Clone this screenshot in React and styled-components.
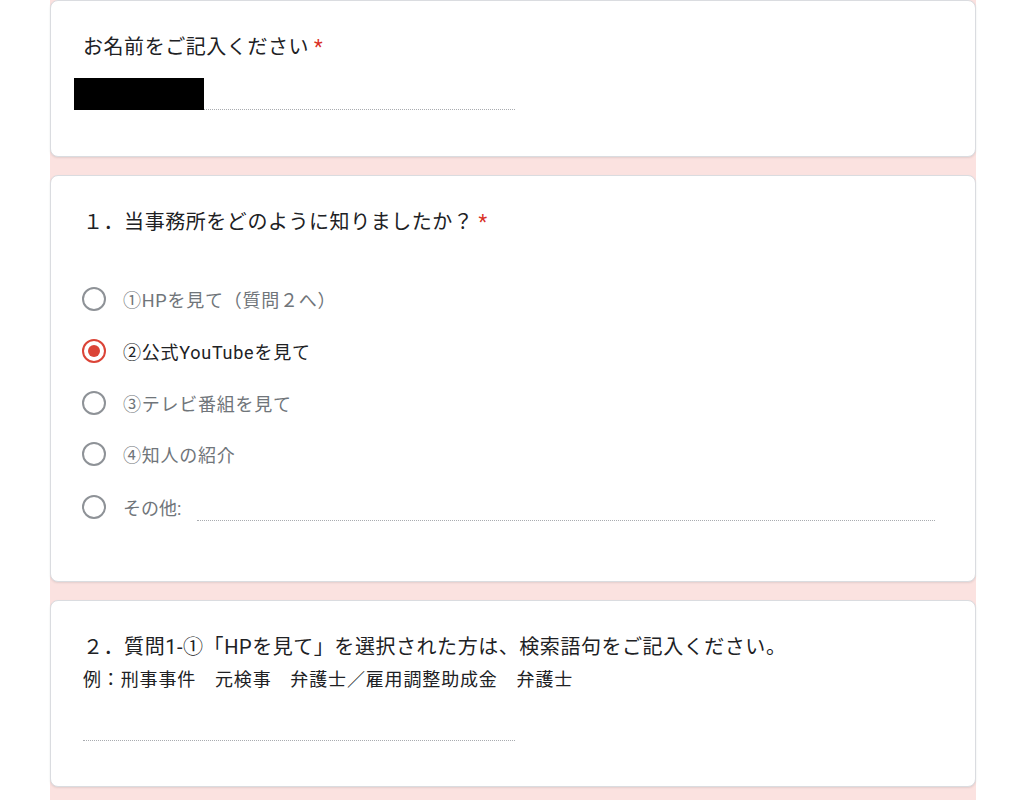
import styled, { createGlobalStyle } from "styled-components";

const GlobalStyle = createGlobalStyle`
  body {
    margin: 0;
    background: #ffffff;
    font-family: Roboto, "Noto Sans CJK JP", sans-serif;
    color: #202124;
  }
`;

const Page = styled.div`
  width: 926px;
  min-height: 800px;
  margin-left: 50px;
  background-color: #fbe2e0;
  display: flex;
  flex-direction: column;
  gap: 18px;
`;

const Card = styled.div`
  position: relative;
  background: #ffffff;
  border: 1px solid #dadce0;
  border-radius: 8px;
  box-shadow: 0 1px 2px rgba(60, 64, 67, 0.12);
  padding: 32px 32px 46px;
  box-sizing: border-box;
  height: ${(props) => props.h}px;
`;

const Title = styled.div`
  font-size: 20px;
  line-height: 28px;
  color: #202124;
  letter-spacing: 0.55px;
`;

const Required = styled.span`
  color: #d93025;
  margin-left: 5px;
`;

const Hint = styled.div`
  font-size: 18px;
  line-height: 26px;
  margin-top: 6px;
  color: #202124;
  letter-spacing: 0.85px;
`;

const Field = styled.div`
  width: ${(props) => props.w}px;
  height: 32px;
  margin-top: ${(props) => props.mt}px;
  border-bottom: 1px dotted #a9acb0;
  box-sizing: border-box;
`;

const Redact = styled.div`
  position: absolute;
  left: 23px;
  top: 77px;
  width: 130px;
  height: 32px;
  background: #000;
`;

const Options = styled.div`
  margin-top: 37px;
  display: flex;
  flex-direction: column;
`;

const Option = styled.div`
  height: ${(props) => props.h || 52}px;
  display: flex;
  align-items: center;
  margin-left: -1px;
`;

const Radio = styled.span`
  width: 24px;
  height: 24px;
  border-radius: 50%;
  border: 2px solid ${(props) => (props.checked ? "#db4437" : "#8e9297")};
  box-sizing: border-box;
  display: flex;
  align-items: center;
  justify-content: center;
  flex-shrink: 0;
  &::after {
    content: "";
    display: ${(props) => (props.checked ? "block" : "none")};
    width: 12px;
    height: 12px;
    border-radius: 50%;
    background: #db4437;
  }
`;

const Label = styled.span`
  margin-left: 17px;
  font-size: 18px;
  color: ${(props) => (props.checked ? "#202124" : "#70757a")};
  letter-spacing: ${(props) => (props.tight ? 0 : 0.75)}px;
  white-space: nowrap;
`;

const OtherLine = styled.div`
  flex: 1;
  margin-left: 16px;
  margin-right: 8px;
  height: 26px;
  border-bottom: 1px dotted #a9acb0;
`;

const options = [
  { text: "①HPを見て（質問２へ）", h: 52 },
  { text: "②公式YouTubeを見て", h: 52 },
  { text: "③テレビ番組を見て", h: 51 },
  { text: "④知人の紹介", h: 52 },
];

export default function App() {
  const selected = 1;
  return (
    <>
      <GlobalStyle />
      <Page>
        <Card h={157}>
          <Title>
            お名前をご記入ください<Required>*</Required>
          </Title>
          <Field w={432} mt={17} />
          <Redact />
        </Card>

        <Card h={407}>
          <Title>
            １．当事務所をどのように知りましたか？<Required>*</Required>
          </Title>
          <Options>
            {options.map((o, i) => (
              <Option key={o.text} h={o.h}>
                <Radio checked={i === selected} />
                <Label checked={i === selected}>{o.text}</Label>
              </Option>
            ))}
            <Option h={54}>
              <Radio />
              <Label tight>その他:</Label>
              <OtherLine />
            </Option>
          </Options>
        </Card>

        <Card h={187}>
          <Title>
            ２．質問1-①「HPを見て」を選択された方は、検索語句をご記入ください。
          </Title>
          <Hint>例：刑事事件　元検事　弁護士／雇用調整助成金　弁護士</Hint>
          <Field w={432} mt={16} />
        </Card>
      </Page>
    </>
  );
}
